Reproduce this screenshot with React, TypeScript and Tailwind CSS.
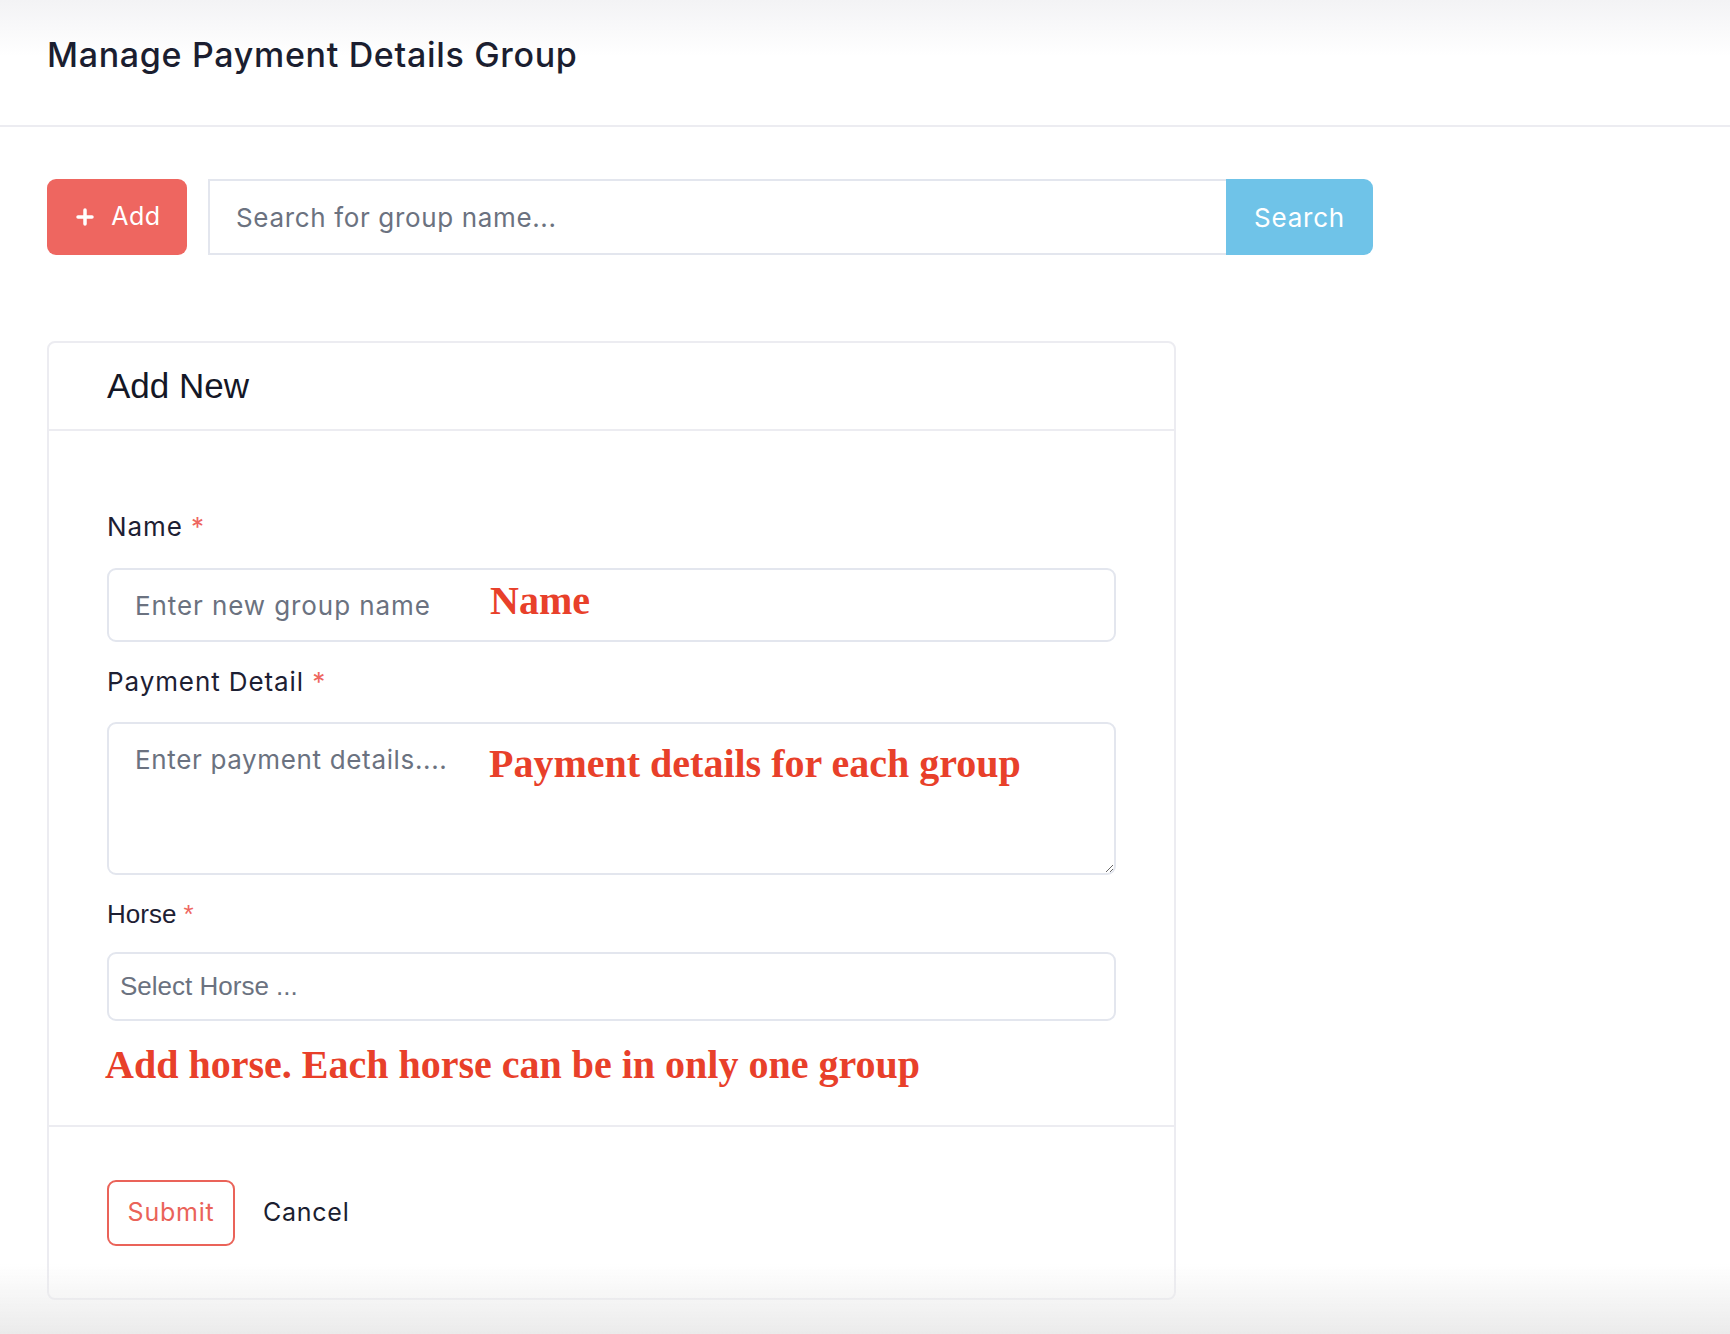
import { Plus } from "lucide-react";

const ui = "font-['Inter','Liberation_Sans',sans-serif]";
const note = "font-['Liberation_Serif',serif] font-bold text-[40px] leading-none text-[#e8402a]";

function Label({ text, sans }: { text: string; sans?: boolean }) {
  return (
    <label
      className={`block text-[26px] leading-[36px] text-[#1d2033] ${
        sans ? "font-['Liberation_Sans',sans-serif]" : `${ui} tracking-[0.035em]`
      }`}
    >
      {text} <span className="text-[#ee6660]">*</span>
    </label>
  );
}

export default function App() {
  return (
    <div className="relative min-h-screen bg-white">
      <header className="h-[127px] border-b-2 border-[#ececf1] bg-gradient-to-b from-[#f3f3f5] to-white to-[45%] px-[47px] pt-[33px]">
        <h1 className={`${ui} text-[34px] font-medium leading-[44px] tracking-[0.02em] text-[#1b1e30]`}>
          Manage Payment Details Group
        </h1>
      </header>

      <main className="px-[47px] pt-[52px]">
        <div className="flex w-[1326px] items-stretch gap-[21px]">
          <button className={`${ui} flex h-[76px] w-[140px] items-center justify-center gap-[14px] rounded-[9px] bg-[#ee6660] text-[25px] tracking-[0.02em] text-white`}>
            <Plus className="h-[24px] w-[24px]" strokeWidth={3.5} />
            Add
          </button>
          <div className="flex flex-1">
            <input
              placeholder="Search for group name..."
              className={`${ui} h-[76px] flex-1 border-2 border-r-0 border-[#e3e6ee] px-[26px] text-[26px] tracking-[0.025em] outline-none placeholder:text-[#6b7280]`}
            />
            <button className={`${ui} w-[147px] rounded-r-[9px] bg-[#6fc3e8] text-[26px] tracking-[0.03em] text-white`}>
              Search
            </button>
          </div>
        </div>

        <section className="mt-[86px] w-[1129px] rounded-[8px] border-2 border-[#ececf1] bg-white">
          <div className="flex h-[88px] items-center border-b-2 border-[#ececf1] px-[58px]">
            <h2 className="font-['Liberation_Sans',sans-serif] text-[35px] text-[#141726]">Add New</h2>
          </div>

          <div className="border-b-2 border-[#ececf1] px-[58px] pb-[40px] pt-[78px]">
            <Label text="Name" />
            <div className="relative mt-[23px]">
              <input
                placeholder="Enter new group name"
                className={`${ui} h-[74px] w-full rounded-[9px] border-2 border-[#e3e6ee] px-[26px] text-[26px] tracking-[0.035em] outline-none placeholder:text-[#6b7280]`}
              />
              <span className={`${note} pointer-events-none absolute left-[383px] top-[13px]`}>Name</span>
            </div>

            <div className="mt-[22px]">
              <Label text="Payment Detail" />
            </div>
            <div className="relative mt-[22px]">
              <textarea
                placeholder="Enter payment details...."
                className={`${ui} block h-[153px] w-full rounded-[9px] border-2 border-[#e3e6ee] px-[26px] pt-[18px] text-[26px] leading-[36px] tracking-[0.025em] outline-none placeholder:text-[#6b7280]`}
              />
              <span className={`${note} pointer-events-none absolute left-[382px] top-[22px]`}>
                Payment details for each group
              </span>
            </div>

            <div className="mt-[21px]">
              <Label text="Horse" sans />
            </div>
            <input
              placeholder="Select Horse ..."
              className="mt-[20px] h-[69px] w-full rounded-[9px] border-2 border-[#e3e6ee] px-[11px] font-['Liberation_Sans',sans-serif] text-[26px] outline-none placeholder:text-[#6b7280]"
            />

            <p className={`${note} mt-[24px] -ml-[2px] leading-[46px]`}>Add horse. Each horse can be in only one group</p>
          </div>

          <div className="flex items-center gap-[28px] px-[58px] pb-[52px] pt-[53px]">
            <button className={`${ui} h-[66px] w-[128px] rounded-[9px] border-2 border-[#ea6359] text-[25px] tracking-[0.03em] text-[#ea6359]`}>
              Submit
            </button>
            <button className={`${ui} text-[25px] tracking-[0.03em] text-[#1b1e30]`}>Cancel</button>
          </div>
        </section>
      </main>

      <div className="pointer-events-none fixed inset-x-0 bottom-0 h-[70px] bg-gradient-to-b from-transparent to-[#ebebeb]" />
    </div>
  );
}
